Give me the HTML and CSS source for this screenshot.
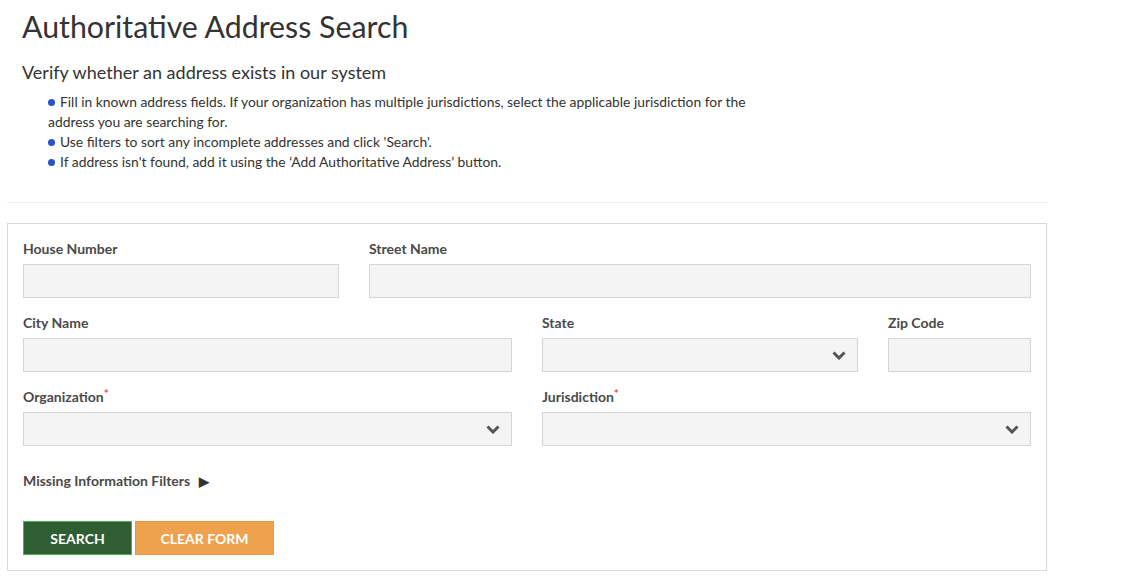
FILE: index.html
```html
<!DOCTYPE html>
<html lang="en">
<head>
<meta charset="utf-8">
<title>Authoritative Address Search</title>
<link rel="stylesheet" href="styles.css">
</head>
<body>
<main class="page">
  <header class="intro">
    <h1 class="title">Authoritative Address Search</h1>
    <h2 class="subtitle">Verify whether an address exists in our system</h2>
    <ul class="tips">
      <li>Fill in known address fields. If your organization has multiple jurisdictions, select the applicable jurisdiction for the address you are searching for.</li>
      <li>Use filters to sort any incomplete addresses and click 'Search'.</li>
      <li>If address isn't found, add it using the ‘Add Authoritative Address’ button.</li>
    </ul>
  </header>
  <hr class="divider">
  <form class="search-box">
    <div class="grid">
      <div class="field span-4">
        <label class="label">House Number</label>
        <input class="input" type="text">
      </div>
      <div class="field span-8">
        <label class="label">Street Name</label>
        <input class="input" type="text">
      </div>
      <div class="field span-6">
        <label class="label">City Name</label>
        <input class="input" type="text">
      </div>
      <div class="field span-4">
        <label class="label">State</label>
        <div class="select">
          <svg class="chevron" viewBox="0 0 14 9" width="14" height="9"><polyline points="1.5,1.5 7,7 12.5,1.5" fill="none" stroke="#555" stroke-width="3"/></svg>
        </div>
      </div>
      <div class="field span-2">
        <label class="label">Zip Code</label>
        <input class="input" type="text">
      </div>
      <div class="field span-6">
        <label class="label">Organization<span class="req">*</span></label>
        <div class="select">
          <svg class="chevron" viewBox="0 0 14 9" width="14" height="9"><polyline points="1.5,1.5 7,7 12.5,1.5" fill="none" stroke="#555" stroke-width="3"/></svg>
        </div>
      </div>
      <div class="field span-6">
        <label class="label">Jurisdiction<span class="req">*</span></label>
        <div class="select">
          <svg class="chevron" viewBox="0 0 14 9" width="14" height="9"><polyline points="1.5,1.5 7,7 12.5,1.5" fill="none" stroke="#555" stroke-width="3"/></svg>
        </div>
      </div>
    </div>
    <div class="filters">Missing Information Filters <span class="tri">&#9654;</span></div>
    <div class="actions">
      <button type="button" class="btn btn-search">SEARCH</button>
      <button type="button" class="btn btn-clear">CLEAR FORM</button>
    </div>
  </form>
</main>
</body>
</html>
```

FILE: styles.css
```css
* { box-sizing: border-box; }

body {
  margin: 0;
  font-family: Lato, "Open Sans", Arial, sans-serif;
  color: #333;
  background: #fff;
}

.page {
  width: 1054px;
  padding: 0 7px;
}

.intro {
  padding: 0 15px;
}

.title {
  margin: 0;
  padding-top: 8px;
  font-size: 30.3px;
  line-height: 36px;
  font-weight: 400;
  color: #333;
}

.subtitle {
  margin: 16px 0 0;
  font-size: 18px;
  line-height: 24px;
  font-weight: 400;
  color: #333;
}

.tips {
  list-style: none;
  margin: 8px 0 0;
  padding: 0 0 0 26px;
  width: 753px;
  font-size: 13.85px;
  line-height: 20px;
  color: #333;
}

.tips li::before {
  content: "";
  display: inline-block;
  width: 7px;
  height: 7px;
  border-radius: 50%;
  background: #2a52c9;
  margin-right: 5px;
  vertical-align: 1px;
}

.divider {
  margin: 30px 0 0;
  border: 0;
  border-top: 1px solid #efefef;
}

.search-box {
  margin-top: 20px;
  border: 1px solid #d9d9d9;
  padding: 15px;
}

.grid {
  display: grid;
  grid-template-columns: repeat(12, 1fr);
  column-gap: 30px;
  row-gap: 15px;
}

.span-2 { grid-column: span 2; }
.span-4 { grid-column: span 4; }
.span-6 { grid-column: span 6; }
.span-8 { grid-column: span 8; }

.field {
  display: flex;
  flex-direction: column;
  gap: 5px;
}

.label {
  font-size: 14px;
  line-height: 20px;
  font-weight: 700;
  color: #4a4a4a;
}

.req {
  color: #d9534f;
  font-size: 12px;
  line-height: 0;
  vertical-align: 4px;
}

.input, .select {
  height: 34px;
  width: 100%;
  background: #f4f4f4;
  border: 1px solid #d6d6d6;
  border-radius: 0;
  margin: 0;
  font: inherit;
}

.select {
  display: flex;
  align-items: center;
  justify-content: flex-end;
  padding-right: 11px;
}

.chevron { display: block; }

.filters {
  margin-top: 25px;
  font-size: 14px;
  line-height: 20px;
  font-weight: 700;
  color: #4a4a4a;
}

.tri {
  font-size: 13px;
  line-height: 0;
  color: #333;
  margin-left: 5px;
}

.actions {
  display: flex;
  gap: 3px;
  margin-top: 30px;
}

.btn {
  height: 34px;
  font-family: inherit;
  font-size: 14px;
  font-weight: 700;
  color: #fff;
  border-radius: 0;
  cursor: pointer;
}

.btn-search {
  width: 109px;
  background: #2e5e32;
  border: 1px solid #4caf50;
}

.btn-clear {
  width: 139px;
  background: #eea24e;
  border: 1px solid #e99a42;
}
```
